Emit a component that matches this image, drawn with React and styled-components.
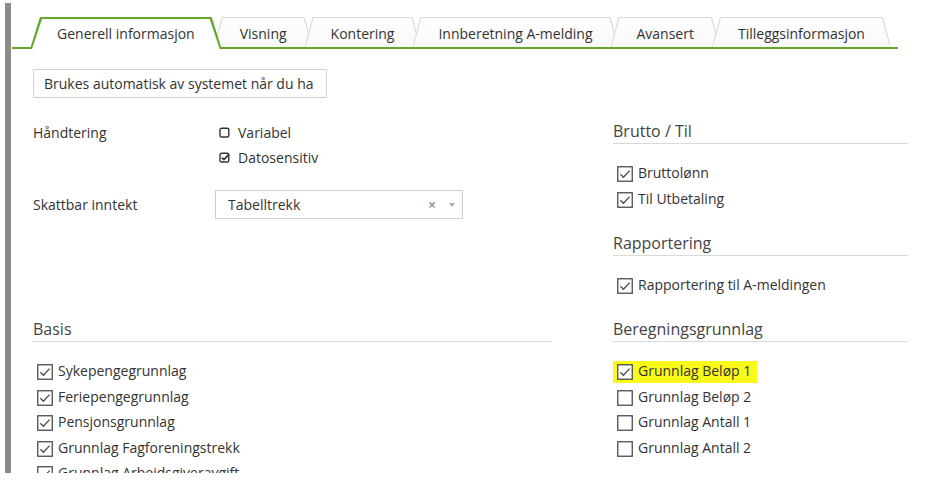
import React from "react";
import styled, { createGlobalStyle } from "styled-components";

const GREEN = "#62a829";

const GlobalStyle = createGlobalStyle`
  html, body {
    margin: 0;
    padding: 0;
    background: #fff;
  }
  body {
    font-family: "Open Sans", "Noto Sans", Arial, sans-serif;
    font-size: 14px;
    color: #333;
  }
`;

const tabs = [
  "Generell informasjon",
  "Visning",
  "Kontering",
  "Innberetning A-melding",
  "Avansert",
  "Tilleggsinformasjon",
];

const basis = [
  "Sykepengegrunnlag",
  "Feriepengegrunnlag",
  "Pensjonsgrunnlag",
  "Grunnlag Fagforeningstrekk",
  "Grunnlag Arbeidsgiveravgift",
];

const grunnlag = [
  { label: "Grunnlag Beløp 1", checked: true, highlight: true },
  { label: "Grunnlag Beløp 2" },
  { label: "Grunnlag Antall 1" },
  { label: "Grunnlag Antall 2" },
];

const Box = ({ checked }) => (
  <BoxSvg width="16" height="16" viewBox="0 0 16 16">
    <rect x="0.75" y="0.75" width="14.5" height="14.5" fill="#fff" stroke="#4d4d4d" strokeWidth="1.3" />
    {checked && (
      <path d="M3.4 8.2 L6.4 11.2 L12.6 4.6" fill="none" stroke="#4d4d4d" strokeWidth="1.3" />
    )}
  </BoxSvg>
);

const OptionIcon = ({ checked }) => (
  <svg width="11" height="11" viewBox="0 0 11 11">
    <rect x="1" y="1.2" width="8.8" height="8.8" rx="1.6" fill="none" stroke="#333" strokeWidth="1.4" />
    {checked && (
      <path d="M2.9 5.6 L4.9 7.6 L9.6 2.6" fill="none" stroke="#333" strokeWidth="1.7" />
    )}
  </svg>
);

const CheckItem = ({ label, checked = true, highlight }) => (
  <CheckRow $highlight={highlight}>
    <Box checked={checked} />
    <span>{label}</span>
  </CheckRow>
);

const App = () => (
  <>
    <GlobalStyle />
    <Frame>
      <TabBar>
        {tabs.map((t, i) => (
          <Tab key={t} $active={i === 0} $first={i === 0}>
            {t}
          </Tab>
        ))}
      </TabBar>

      <Body>
        <InfoButton>
          <ButtonText>Brukes automatisk av systemet når du ha</ButtonText>
        </InfoButton>

        <Grid>
          <div>
            <FormRow>
              <Label>Håndtering</Label>
              <Options>
                <Option>
                  <OptionIcon />
                  Variabel
                </Option>
                <Option>
                  <OptionIcon checked />
                  Datosensitiv
                </Option>
              </Options>
            </FormRow>
            <FormRow $center $gap={20}>
              <Label>Skattbar inntekt</Label>
              <Select>
                <SelectValue>Tabelltrekk</SelectValue>
                <Clear>×</Clear>
                <Caret />
              </Select>
            </FormRow>
          </div>

          <div>
            <Section>
              <SectionTitle>Brutto / Til</SectionTitle>
              <CheckList>
                <CheckItem label="Bruttolønn" />
                <CheckItem label="Til Utbetaling" />
              </CheckList>
            </Section>
            <Section $spaced>
              <SectionTitle>Rapportering</SectionTitle>
              <CheckList>
                <CheckItem label="Rapportering til A-meldingen" />
              </CheckList>
            </Section>
          </div>

          <Section>
            <SectionTitle>Basis</SectionTitle>
            <CheckList $inset={-1}>
              {basis.map((b) => (
                <CheckItem key={b} label={b} />
              ))}
            </CheckList>
          </Section>

          <Section>
            <SectionTitle>Beregningsgrunnlag</SectionTitle>
            <CheckList>
              {grunnlag.map((g) => (
                <CheckItem key={g.label} label={g.label} checked={!!g.checked} highlight={g.highlight} />
              ))}
            </CheckList>
          </Section>
        </Grid>
      </Body>
    </Frame>
  </>
);

const Frame = styled.div`
  margin: 3px 0 0 5px;
  height: 470px;
  border-left: 6px solid #8a8a8a;
  overflow: hidden;
`;

const TabBar = styled.div`
  display: flex;
  align-items: flex-end;
  margin-left: 1px;
  width: 886px;
  padding: 14px 0 0 18px;
  box-sizing: border-box;
  border-bottom: 2px solid ${GREEN};
`;

const Tab = styled.div`
  position: relative;
  z-index: ${(p) => (p.$active ? 3 : 1)};
  height: 30px;
  box-sizing: border-box;
  padding: 3px ${(p) => (p.$active ? 27 : 26)}px 0;
  margin-left: ${(p) => (p.$first ? 0 : -8)}px;
  font-size: 14px;
  line-height: 27px;
  color: #333;
  white-space: nowrap;

  &::before,
  &::after {
    content: "";
    position: absolute;
    z-index: -1;
    clip-path: polygon(
      ${(p) => (p.$active ? 10 : 8)}px 0,
      calc(100% - ${(p) => (p.$active ? 10 : 8)}px) 0,
      100% 100%,
      0 100%
    );
  }
  &::before {
    inset: 0 0 ${(p) => (p.$active ? -2 : 0)}px 0;
    background: ${(p) => (p.$active ? GREEN : "#dadada")};
  }
  &::after {
    inset: ${(p) => (p.$active ? "2px 2px -2px 2px" : "1px 1px 0 1px")};
    background: ${(p) => (p.$active ? "#fff" : "linear-gradient(#fff, #f8f8f8)")};
  }
`;

const Body = styled.div`
  padding: 20px 0 0 22px;
`;

const InfoButton = styled.div`
  width: 294px;
  height: 29px;
  box-sizing: border-box;
  border: 1px solid #d2d2d2;
  border-radius: 1px;
  padding: 0 10px;
  line-height: 27px;
  color: #333;
`;

const ButtonText = styled.div`
  white-space: nowrap;
  overflow: hidden;
`;

const Grid = styled.div`
  display: grid;
  grid-template-columns: 519px 295px;
  column-gap: 61px;
  row-gap: 21px;
  margin-top: 22px;
`;

const FormRow = styled.div`
  display: grid;
  grid-template-columns: 180px 1fr;
  align-items: ${(p) => (p.$center ? "center" : "start")};
  margin-top: ${(p) => p.$gap || 0}px;
`;

const Label = styled.div`
  line-height: 25px;
  color: #333;
`;

const Options = styled.div`
  display: flex;
  flex-direction: column;
  padding-left: 6px;
`;

const Option = styled.div`
  display: flex;
  align-items: center;
  gap: 8px;
  height: 25px;
  color: #333;
`;

const Select = styled.div`
  display: flex;
  align-items: center;
  width: 248px;
  height: 29px;
  margin-left: 2px;
  box-sizing: border-box;
  border: 1px solid #cfcfcf;
  padding: 0 7px 0 12px;
`;

const SelectValue = styled.div`
  flex: 1;
  color: #333;
`;

const Clear = styled.span`
  color: #9a9a9a;
  font-size: 14px;
  font-weight: bold;
  margin-right: 13px;
  line-height: 1;
`;

const Caret = styled.span`
  width: 0;
  height: 0;
  border-left: 3px solid transparent;
  border-right: 3px solid transparent;
  border-top: 4px solid #aaa;
`;

const Section = styled.div`
  margin-top: ${(p) => (p.$spaced ? 21 : 0)}px;
`;

const SectionTitle = styled.div`
  font-size: 16px;
  line-height: 22px;
  color: #444;
  padding-bottom: 1px;
  border-bottom: 1px solid #d9d9d9;
`;

const CheckList = styled.div`
  display: flex;
  flex-direction: column;
  align-items: flex-start;
  margin-top: 16px;
  padding-left: ${(p) => p.$inset ?? 0}px;
`;

const CheckRow = styled.div`
  display: flex;
  align-items: center;
  gap: 5px;
  height: 25.4px;
  box-sizing: border-box;
  padding: 0 ${(p) => (p.$highlight ? 6 : 0)}px 0 4px;
  color: #333;
  white-space: nowrap;
  background: ${(p) =>
    p.$highlight ? "linear-gradient(#f9f91a, #f9f91a) 0 3px / 100% 22px no-repeat" : "none"};
`;

const BoxSvg = styled.svg`
  flex: none;
  margin-top: 3px;
`;

export default App;
